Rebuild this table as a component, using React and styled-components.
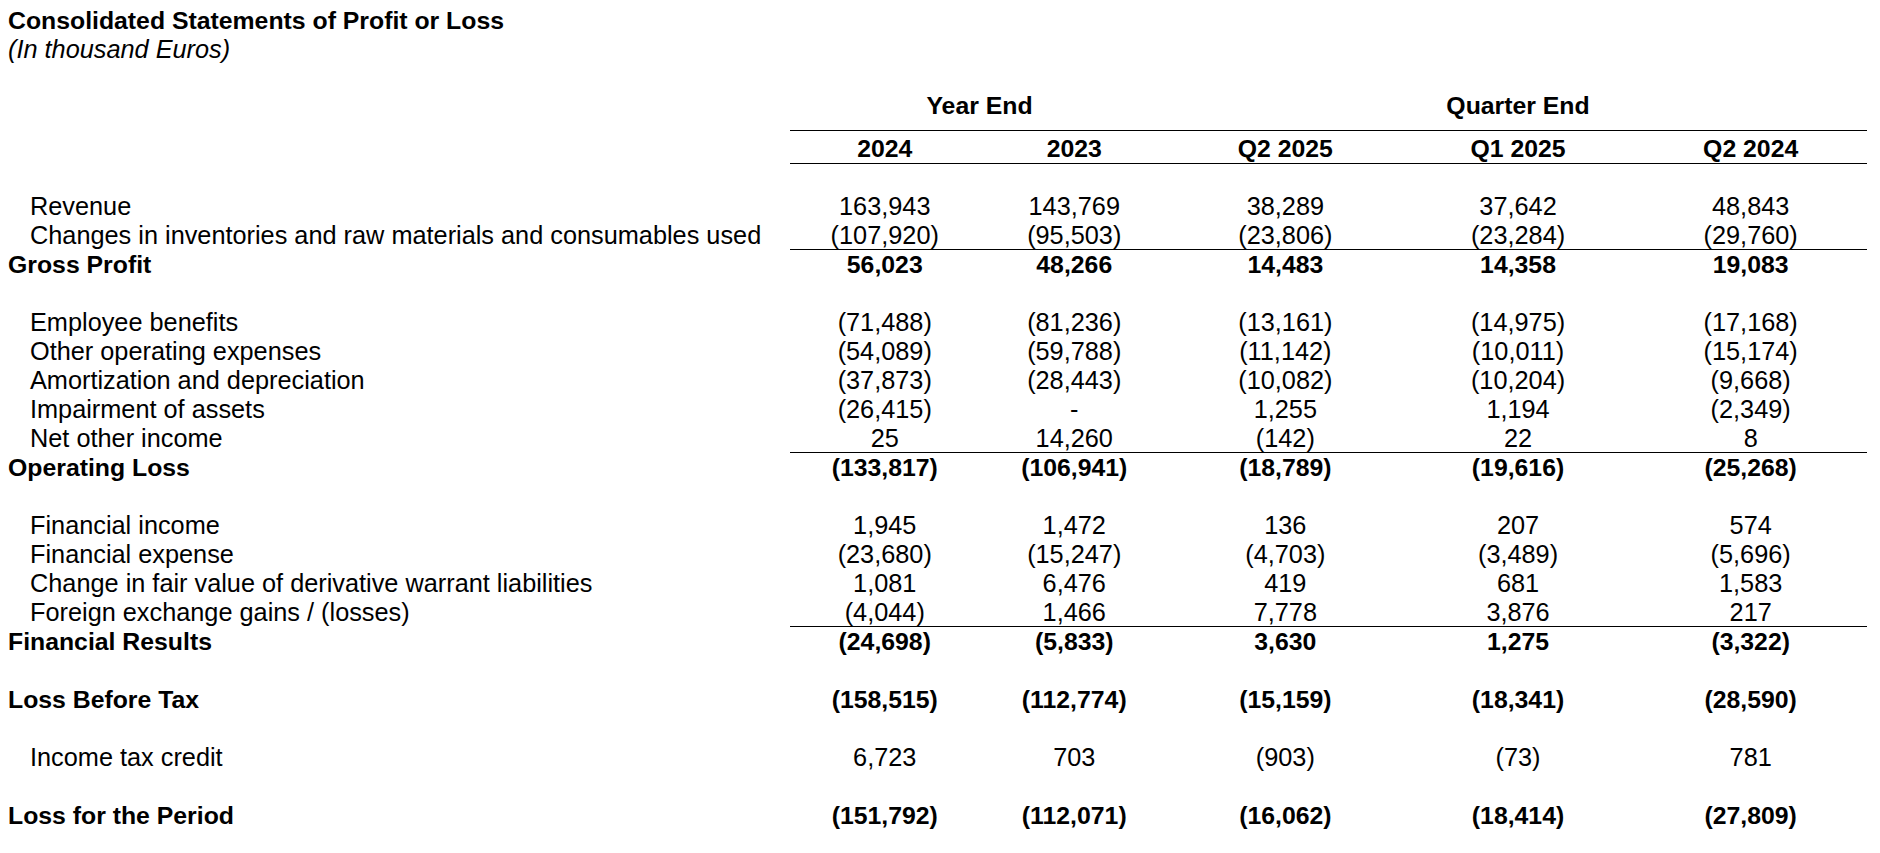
import React from 'react';
import styled, { createGlobalStyle } from 'styled-components';

const GlobalStyle = createGlobalStyle`
  html, body {
    margin: 0;
    padding: 0;
    background: #fff;
  }
  body {
    font-family: "Liberation Sans", Arial, sans-serif;
    color: #000;
  }
`

const COLUMNS = '782px 189.5px 189.5px 232.7px 232.7px 232.6px';

const Page = styled.div`
  padding: 6px 12px 0 8px;
  font-size: 25.3px;
  line-height: 29px;
`

const Title = styled.div`
  font-weight: bold;
  font-size: 24.8px;
`

const Subtitle = styled.div`
  font-style: italic;
`

const Table = styled.div`
  margin-top: 27px;
`

const Row = styled.div`
  display: grid;
  grid-template-columns: ${COLUMNS};
  height: 29px;
`

const GroupHead = styled.div`
  display: grid;
  grid-template-columns: 782px 379px 698px;
`

const GroupCell = styled.div`
  grid-column: ${p => p.$col};
  text-align: center;
  font-weight: bold;
  font-size: 24.8px;
  padding-bottom: 10px;
  border-bottom: ${p => (p.$col > 1 ? '1px solid #000' : 'none')};
`

const PeriodRow = styled.div`
  display: grid;
  grid-template-columns: ${COLUMNS};
  margin-bottom: 28px;
`

const PeriodCell = styled.div`
  text-align: center;
  font-weight: bold;
  font-size: 24.8px;
  padding-top: 3px;
  border-bottom: ${p => (p.$blank ? 'none' : '1px solid #000')};
`

const Label = styled.div`
  padding-left: ${p => (p.$indent ? '22px' : '0')};
  font-weight: ${p => (p.$bold ? 'bold' : 'normal')};
  font-size: ${p => (p.$bold ? '24.8px' : '25.3px')};
  white-space: nowrap;
`

const Value = styled.div`
  text-align: center;
  font-weight: ${p => (p.$bold ? 'bold' : 'normal')};
  font-size: ${p => (p.$bold ? '24.8px' : '25.3px')};
  box-shadow: ${p => (p.$ruled ? 'inset 0 -1px 0 #000' : 'none')};
`

const Gap = styled.div`
  height: 29px;
`

const periods = ['2024', '2023', 'Q2 2025', 'Q1 2025', 'Q2 2024'];

const rows = [
  { kind: 'item', label: 'Revenue', values: ['163,943', '143,769', '38,289', '37,642', '48,843'] },
  { kind: 'item', ruled: true, label: 'Changes in inventories and raw materials and consumables used', values: ['(107,920)', '(95,503)', '(23,806)', '(23,284)', '(29,760)'] },
  { kind: 'total', label: 'Gross Profit', values: ['56,023', '48,266', '14,483', '14,358', '19,083'] },
  { kind: 'gap' },
  { kind: 'item', label: 'Employee benefits', values: ['(71,488)', '(81,236)', '(13,161)', '(14,975)', '(17,168)'] },
  { kind: 'item', label: 'Other operating expenses', values: ['(54,089)', '(59,788)', '(11,142)', '(10,011)', '(15,174)'] },
  { kind: 'item', label: 'Amortization and depreciation', values: ['(37,873)', '(28,443)', '(10,082)', '(10,204)', '(9,668)'] },
  { kind: 'item', label: 'Impairment of assets', values: ['(26,415)', '-', '1,255', '1,194', '(2,349)'] },
  { kind: 'item', ruled: true, label: 'Net other income', values: ['25', '14,260', '(142)', '22', '8'] },
  { kind: 'total', label: 'Operating Loss', values: ['(133,817)', '(106,941)', '(18,789)', '(19,616)', '(25,268)'] },
  { kind: 'gap' },
  { kind: 'item', label: 'Financial income', values: ['1,945', '1,472', '136', '207', '574'] },
  { kind: 'item', label: 'Financial expense', values: ['(23,680)', '(15,247)', '(4,703)', '(3,489)', '(5,696)'] },
  { kind: 'item', label: 'Change in fair value of derivative warrant liabilities', values: ['1,081', '6,476', '419', '681', '1,583'] },
  { kind: 'item', ruled: true, label: 'Foreign exchange gains / (losses)', values: ['(4,044)', '1,466', '7,778', '3,876', '217'] },
  { kind: 'total', label: 'Financial Results', values: ['(24,698)', '(5,833)', '3,630', '1,275', '(3,322)'] },
  { kind: 'gap' },
  { kind: 'total', label: 'Loss Before Tax', values: ['(158,515)', '(112,774)', '(15,159)', '(18,341)', '(28,590)'] },
  { kind: 'gap' },
  { kind: 'item', label: 'Income tax credit', values: ['6,723', '703', '(903)', '(73)', '781'] },
  { kind: 'gap' },
  { kind: 'total', label: 'Loss for the Period', values: ['(151,792)', '(112,071)', '(16,062)', '(18,414)', '(27,809)'] },
];

const App = () => {
  return (
    <Page>
      <GlobalStyle />
      <Title>Consolidated Statements of Profit or Loss</Title>
      <Subtitle>(In thousand Euros)</Subtitle>
      <Table>
        <GroupHead>
          <GroupCell $col={1} />
          <GroupCell $col={2}>Year End</GroupCell>
          <GroupCell $col={3}>Quarter End</GroupCell>
        </GroupHead>
        <PeriodRow>
          <PeriodCell $blank />
          {periods.map(p => <PeriodCell key={p}>{p}</PeriodCell>)}
        </PeriodRow>
        {rows.map((row, i) => {
          if (row.kind === 'gap') return <Gap key={i} />;
          const bold = row.kind === 'total';
          return (
            <Row key={i}>
              <Label $indent={!bold} $bold={bold}>{row.label}</Label>
              {row.values.map((v, j) => (
                <Value key={j} $bold={bold} $ruled={row.ruled}>{v}</Value>
              ))}
            </Row>
          );
        })}
      </Table>
    </Page>
  );
}

export default App;
